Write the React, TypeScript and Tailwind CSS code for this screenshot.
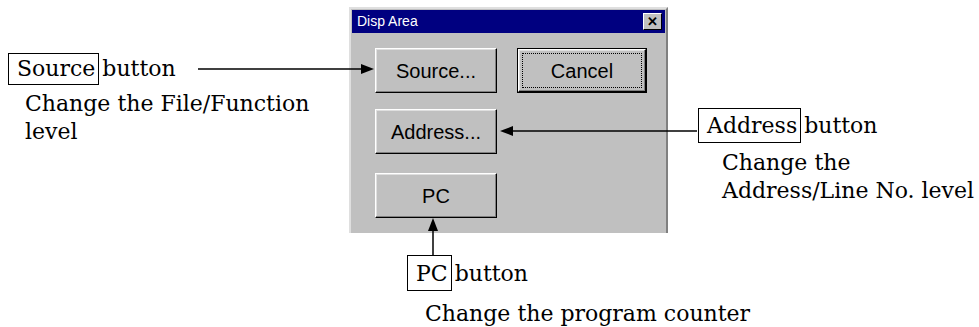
import React from 'react';

const serif = "font-['DejaVu_Serif',serif]";
const sans = "font-['Liberation_Sans',Arial,sans-serif]";

const WinButton: React.FC<{ label: string; isDefault?: boolean }> = ({ label, isDefault }) => {
  if (isDefault) {
    return (
      <div className="w-[130px] h-[45px] border border-black bg-[#c0c0c0]">
        <div className="w-full h-full border border-t-white border-l-white border-r-black border-b-black shadow-[inset_-1px_-1px_#808080,inset_1px_1px_#dfdfdf] p-[3px]">
          <div className="w-full h-full border border-dotted border-black flex items-center justify-center text-[20px] text-black">
            {label}
          </div>
        </div>
      </div>
    );
  }
  return (
    <div className="w-[122px] h-[45px] bg-[#c0c0c0] border border-t-white border-l-white border-r-black border-b-black shadow-[inset_-1px_-1px_#808080,inset_1px_1px_#dfdfdf] flex items-center justify-center text-[20px] text-black">
      {label}
    </div>
  );
};

const Label: React.FC<{ name: string; h: string }> = ({ name, h }) => (
  <div className="flex items-center whitespace-nowrap">
    <span className={`border border-black pl-[8px] pr-[3px] flex items-center ${h}`}>{name}</span>
    <span className="ml-[3px]">button</span>
  </div>
);

export default function App() {
  return (
    <div className={`relative w-[979px] h-[327px] overflow-hidden bg-white text-black text-[22px] ${serif}`}>
      <div className="flex">
        {/* Source callout */}
        <div className="w-[349px] shrink-0 pt-[52px] pl-[8px]">
          <Label name="Source" h="h-[32px]" />
          <div className="pl-[17px] mt-[5px] leading-[28px]">
            Change the File/Function
            <br />
            level
          </div>
        </div>

        {/* Dialog + PC callout */}
        <div className="w-[319px] shrink-0">
          <div
            className={`mt-[7px] h-[226px] bg-[#c0c0c0] border-t-2 border-l-2 border-r-2 border-t-[#dfdfdf] border-l-[#dfdfdf] border-r-[#808080] p-[1px] ${sans}`}
          >
            <div className="h-[23px] bg-[#000080] flex items-center justify-between pl-[5px] pr-[3px]">
              <span className="text-white text-[14px]">Disp Area</span>
              <div className="w-[19px] h-[17px] bg-[#c0c0c0] border border-t-white border-l-white border-r-black border-b-black flex items-center justify-center text-[13px] font-bold leading-none">
                ✕
              </div>
            </div>
            <div className="pl-[23px] pt-[15px]">
              <div className="flex gap-[20px]">
                <WinButton label="Source..." />
                <WinButton label="Cancel" isDefault />
              </div>
              <div className="mt-[16px]">
                <WinButton label="Address..." />
              </div>
              <div className="mt-[19px]">
                <WinButton label="PC" />
              </div>
            </div>
          </div>
          <div className="ml-[58px] mt-[22px]">
            <Label name="PC" h="h-[36px]" />
            <div className="pl-[18px] mt-[9px] whitespace-nowrap leading-[28px]">
              Change the program counter
            </div>
          </div>
        </div>

        {/* Address callout */}
        <div className="flex-1 pl-[30px] pt-[108px]">
          <Label name="Address" h="h-[35px]" />
          <div className="pl-[24px] mt-[6px] leading-[28px] whitespace-nowrap">
            Change the
            <br />
            Address/Line No. level
          </div>
        </div>
      </div>

      {/* arrows */}
      <svg className="absolute inset-0 pointer-events-none" width="979" height="327">
        <line x1="198" y1="69" x2="362" y2="69" stroke="black" strokeWidth="1.5" />
        <polygon points="374,69 361,64 361,74" fill="black" />
        <line x1="512" y1="131" x2="697" y2="131" stroke="black" strokeWidth="1.5" />
        <polygon points="500,131 513,126 513,136" fill="black" />
        <line x1="433" y1="230" x2="433" y2="256" stroke="black" strokeWidth="1.5" />
        <polygon points="433,218 428,231 438,231" fill="black" />
      </svg>
    </div>
  );
}
